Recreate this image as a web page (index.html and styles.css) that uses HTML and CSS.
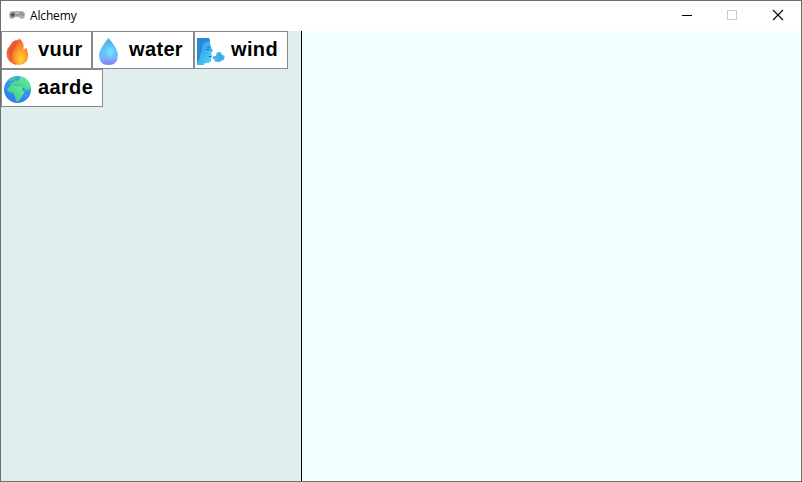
FILE: index.html
```html
<!DOCTYPE html>
<html lang="nl">
<head>
<meta charset="utf-8">
<title>Alchemy</title>
<link rel="stylesheet" href="styles.css">
</head>
<body>
<div class="window">
  <header class="titlebar">
    <svg class="app-icon" width="16" height="10" viewBox="0 0 16 10">
      <path d="M4 1h8q4 0 4 4t-3 4q-2 0-3-2H6Q5 9 3 9 0 9 0 5t4-4z" fill="#b4b7bd"/>
      <circle cx="3.8" cy="4.8" r="2.7" fill="#858b95"/>
      <path d="M3.800 3v3.600M2 4.800h3.600" stroke="#3c4656" stroke-width="1.2"/>
      <path d="M7 5h2" stroke="#70747c"/>
      <circle cx="12.2" cy="4.8" r="2.8" fill="#a5a7ae"/>
      <circle cx="12.2" cy="3" r=".9" fill="#5c86c8"/>
      <circle cx="14" cy="4.8" r=".9" fill="#d65c62"/>
      <circle cx="12.2" cy="6.6" r=".9" fill="#d2bb68"/>
      <circle cx="10.5" cy="4.8" r=".9" fill="#65a87b"/>
    </svg>
    <span class="title">Alchemy</span>
    <svg class="controls" width="138" height="30" viewBox="0 0 138 30" fill="none" shape-rendering="crispEdges">
      <path d="M19 14.5h10" stroke="#000"/>
      <rect x="64.5" y="9.500" width="9" height="9" stroke="#ccc"/>
      <path d="M110 9l10 10M120 9l-10 10" stroke="#000" stroke-width="1.1" shape-rendering="auto"/>
    </svg>
  </header>
  <main class="content">
    <section class="elements">
      <div class="element vuur">
        <svg class="icon" width="30" height="30" viewBox="0 0 30 30">
          <defs>
            <linearGradient id="fireBack" x1="0" y1="0" x2="0" y2="1"><stop offset="0" stop-color="#ef5a34"/><stop offset="1" stop-color="#f0703c"/></linearGradient>
            <radialGradient id="fire" cx=".55" cy=".78" r=".8"><stop offset="0" stop-color="#ffd83a"/><stop offset=".4" stop-color="#ffa028"/><stop offset="1" stop-color="#f0552c"/></radialGradient>
          </defs>
          <path d="M15 4Q10 4 8 8q-1 2-3 4Q3 15 4 21q2 6 9 8l6-5V6z" fill="url(#fireBack)"/>
          <path d="M8 9q0 4-2 9m6-12q-1 5-4 10-1 2 0 8" fill="none" stroke="#d24d33" stroke-width=".8"/>
          <path d="M15.500 2q1 5-3 10-4 5-3 9 1 8 7.500 8 7.500-1 8-8.500 0-5-1.500-9-2 2-3 2 1-8-5-11.500z" fill="url(#fire)"/>
        </svg>
        <span class="name">vuur</span>
      </div>
      <div class="element water">
        <svg class="icon" width="30" height="30" viewBox="0 0 30 30">
          <defs>
            <linearGradient id="drop" x1="0" y1="0" x2="0" y2="1"><stop offset="0" stop-color="#4da9dc"/><stop offset=".45" stop-color="#61c5fa"/><stop offset=".75" stop-color="#75b3ff"/><stop offset="1" stop-color="#8578f3"/></linearGradient>
            <radialGradient id="shine"><stop offset="0" stop-color="#77e7ff"/><stop offset="1" stop-color="#77e7ff" stop-opacity="0"/></radialGradient>
          </defs>
          <path d="M14.500 2Q5 13 5 19.500 5.500 29 14.500 29t9.500-9.500Q24 13 14.500 2z" fill="url(#drop)"/>
          <ellipse cx="16.500" cy="16" rx="5.500" ry="8" fill="url(#shine)"/>
        </svg>
        <span class="name">water</span>
      </div>
      <div class="element wind">
        <svg class="icon" width="30" height="30" viewBox="0 0 30 30">
          <defs>
            <linearGradient id="face" x1="0" y1="0" x2="1" y2="1"><stop offset="0" stop-color="#2496e2"/><stop offset=".6" stop-color="#40bcf5"/><stop offset="1" stop-color="#57cefc"/></linearGradient>
          </defs>
          <path d="M1 2h12q1 2 1 5l1 4 2 4-2 2 1 3-1 2v3q-1 2-6 2l-1 2H1z" fill="url(#face)"/>
          <path d="M1 2h12l1 3Q7 5 6 11q0 5-2 8 0 4-3 8z" fill="#2a87d0"/>
          <path d="M4 4q-2 8 0 13" fill="none" stroke="#2f95dd"/>
          <path d="M10.500 11h4" stroke="#2277bd"/>
          <path d="M10.500 13.500h3" stroke="#1c65a9" stroke-width="1.300"/>
          <path d="M13 20.500h2.500" stroke="#1c76b5"/>
          <path d="M17 21q1-2 3-1 0-4 3-4t3 3q3 0 2.500 3-.5 3-3 2.500-2 2.500-5 1-2 1-2-2-3-1-1.500-2.500z" fill="#43b5e8"/>
          <path d="M22 20q3-2 3 1t-3 2" fill="none" stroke="#329dd6"/>
        </svg>
        <span class="name">wind</span>
      </div>
      <div class="element aarde">
        <svg class="icon" width="30" height="30" viewBox="0 0 30 30">
          <defs>
            <linearGradient id="ocean" x1=".7" y1="0" x2=".3" y2="1"><stop offset="0" stop-color="#37a9e6"/><stop offset="1" stop-color="#2c7cf0"/></linearGradient>
            <linearGradient id="land" x1="1" y1="0" x2="0" y2="1"><stop offset="0" stop-color="#64f7a4"/><stop offset="1" stop-color="#42b77c"/></linearGradient>
          </defs>
          <circle cx="14.500" cy="15.500" r="13.500" fill="url(#ocean)"/>
          <path d="M17 3h4q5 3 7 10l-1 3-2-1-1 3-2-3-2-1-2 1-3-3-2-1-2 1-4-1 1-2 3-1 1-2 2 1 2-1z" fill="url(#land)"/>
          <path d="M6 13l3-2 4 1 5 1 2 4 2 0-2 4-2 3-3 4-2-1-1-5-2-3-4-1-2-2z" fill="url(#land)"/>
          <path d="M6 6l5-3 2 1-2 2-5 1zM8 9l2-1v2zM22 21l1 0-1 3z" fill="#4fcc94"/>
        </svg>
        <span class="name">aarde</span>
      </div>
    </section>
    <section class="workspace"></section>
  </main>
</div>
</body>
</html>
```
FILE: styles.css
```css
* {
  box-sizing: border-box;
}

body {
  margin: 0;
}

.window {
  width: 802px;
  height: 482px;
  border: 1px solid #6e6e6e;
  display: flex;
  flex-direction: column;
  background: #fff;
}

.titlebar {
  height: 30px;
  display: flex;
  align-items: center;
  padding-left: 8px;
}

.app-icon {
  margin-top: -2px;
}

.title {
  margin-left: 5px;
  font: 12px/16px "Open Sans", sans-serif;
  letter-spacing: -0.15px;
  color: #000;
}

.controls {
  margin-left: auto;
}

.content {
  flex: 1;
  display: flex;
}

.elements {
  width: 301px;
  border-right: 1px solid #000;
  background: #e0eeee;
  display: flex;
  flex-wrap: wrap;
  align-content: flex-start;
}

.workspace {
  flex: 1;
  background: #f0ffff;
}

.element {
  height: 38px;
  border: 1px solid #838b8b;
  background: #fff;
  display: flex;
  align-items: center;
}

.vuur {
  width: 91px;
}

.water,
.aarde {
  width: 102px;
}

.wind {
  width: 94px;
}

.icon {
  margin: 2px 0 0 1px;
}

.name {
  margin: -2px 0 0 5px;
  font: bold 20px/24px "Liberation Sans", sans-serif;
  letter-spacing: 0.35px;
  color: #000;
}
```
